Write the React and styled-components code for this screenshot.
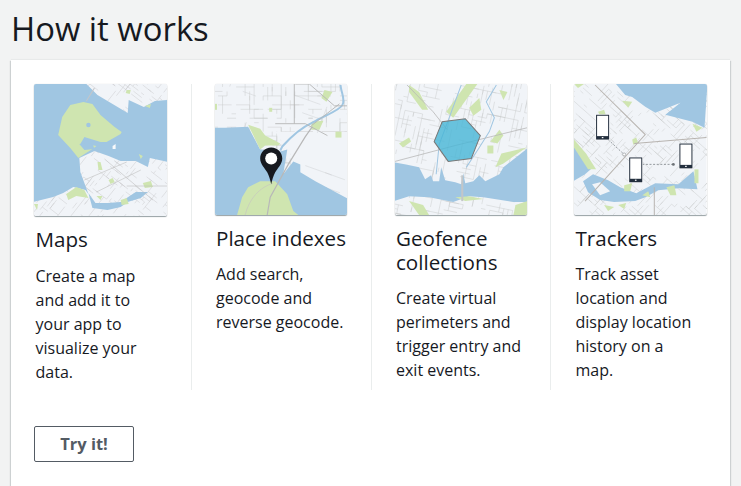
import React from "react";
import styled, { createGlobalStyle } from "styled-components";

const Global = createGlobalStyle`
  html, body { margin: 0; padding: 0; background: #f2f3f3; }
  body { font-family: "Open Sans", "Noto Sans", sans-serif; color: #16191f; }
`;
const Page = styled.div`
  width: 741px; height: 486px; overflow: hidden; box-sizing: border-box;
  padding: 0 11px; display: flex; flex-direction: column;
`;
const Heading = styled.h1`
  margin: 0; height: 60px; box-sizing: border-box; padding-top: 8px;
  font-size: 32.8px; line-height: 42px; font-weight: 400; color: #16191f;
`;
const Card = styled.section`
  flex: 1; width: 719px; background: #fff; padding-top: 24px; box-sizing: border-box;
  box-shadow: 0 -1px 1px 0 rgba(0,28,36,.04), 1px 1px 1px 0 rgba(0,28,36,.15), -1px 1px 1px 0 rgba(0,28,36,.15);
`;
const Columns = styled.div`
  display: grid; grid-template-columns: 180.5px 180px 179.5px 179px;
`;
const Column = styled.article`
  box-sizing: border-box; height: 306px; padding: 0 23px;
  border-right: ${p => (p.$last ? "none" : "1px solid #eaeded")};
`;
const Art = styled.div`
  width: ${p => (p.$tall ? 133 : 132.5)}px; height: ${p => (p.$tall ? 132 : 131)}px; margin-bottom: 11px;
  border-radius: 2px; overflow: hidden;
  box-shadow: 0 1px 1px 0 rgba(0,28,36,.4), 0 0 1px 0 rgba(0,28,36,.2);
  svg { display: block; width: 100%; height: 100%; filter: blur(0.4px); }
`;
const Title = styled.h2`
  margin: 0 0 ${p => (p.$tall ? 13 : 12)}px 1.5px; font-size: 20.6px; line-height: 24px; font-weight: 400; color: #16191f;
`;
const Body = styled.p`
  margin: 0 0 0 1.5px; font-size: 16px; line-height: 24px; color: #16191f;
`;
const Button = styled.button`
  display: block; margin: 36px 0 0 23px; width: 100px; height: 36px; box-sizing: border-box;
  background: #fff; border: 1px solid #545b64; border-radius: 2px;
  color: #545b64; font: 700 16.5px/22px "Open Sans", "Noto Sans", sans-serif; padding: 0;
`;

const LAND = "#f1f4f8", WATER = "#a0c6e2", GREEN = "#cfe5b0";

/* seeded street texture: short grid-aligned segments, drawn under the water */
function streets(seed, angle, step, count) {
  let s = seed;
  const r = () => ((s = (s * 16807) % 2147483647) / 2147483647);
  const a = (angle * Math.PI) / 180;
  const cos = Math.cos(a), sin = Math.sin(a);
  let d = "";
  for (let i = 0; i < count; i++) {
    const u = Math.round((r() * 220 - 110) / step) * step;
    const v = Math.round((r() * 220 - 110) / step) * step;
    const len = step * (1 + Math.floor(r() * 4));
    const h = r() > 0.5;
    const x1 = 66 + u * cos - v * sin, y1 = 66 + u * sin + v * cos;
    const du = h ? len : 0, dv = h ? 0 : len;
    const x2 = x1 + du * cos - dv * sin, y2 = y1 + du * sin + dv * cos;
    d += `M${x1.toFixed(1)} ${y1.toFixed(1)}L${x2.toFixed(1)} ${y2.toFixed(1)}`;
  }
  return d;
}
function Base({ seed, angle = 0, step = 4, count = 420, children }) {
  return (
    <svg viewBox="0 0 132 132" preserveAspectRatio="none" aria-hidden="true">
      <rect width="132" height="132" fill={LAND} />
      <path d={streets(seed, angle, step, count)} fill="none" stroke="#c6c8c9" strokeWidth=".45" />
      {children}
    </svg>
  );
}
const Poly = ({ f, p }) => <polygon fill={f} points={p} />;
const Road = ({ d, w = 0.8, c = "#b5b5b5", dash }) => (
  <path d={d} fill="none" stroke={c} strokeWidth={w} strokeDasharray={dash} />
);
const Specks = ({ items }) => items.map((p, i) => <Poly key={i} f={GREEN} p={p} />);

function MapsArt() {
  return (
    <Base seed={11} angle={38} step={3.5} count={760}>
      <path fillRule="evenodd" fill={WATER} d="M0 0H132V132H0Z
        M51 -1 L63 11 L78 20 L93 29 L94 16 L109 23 L120 17 L133 16 L133 -1Z
        M45 74 L60 67 L74 72 L86 77 L101 77 L113 83 L115 74 L133 78 L133 133 L-1 133 L-1 118 L19 113 L29 109 L39 103 L51 106 L54 110 L46 88Z" />
      <Poly f={GREEN} p="49,18 36,21 28,33 24,51 36,64 44,74 58,65 62,62 52,60 46,60 50,53 66,58 72,58 86,50 87,48 80,43 66,31 58,20" />
      <Poly f={WATER} p="45,60 58,59 60,65 50,66" />
      <circle cx="54" cy="41" r="2.2" fill={WATER} />
      <Poly f="#f7f9fb" p="78,62 81,60 81,65 78,65" />
      <Poly f={WATER} p="54,109 61,119 73,119 86,118 101,108 113,108 106,114 93,118 86,123 73,126 58,124" />
      <Poly f={GREEN} p="32,110 42,103 50,106 54,114 42,112 34,116" />
      <Specks items={["63,78 66,78 68,86 64,86", "108,99 116,97 118,103 110,104", "86,116 92,114 94,120 87,121", "74,96 78,94 80,98 76,100", "92,6 96,6 95,10 91,9", "110,22 116,20 115,24", "0,120 4,120 3,126", "104,70 108,72 106,75", "62,112 68,112 66,116"]} />
      <Road d="M52 17 L60 4" w="1" c="#c4c6c8" />
      <Road d="M70 75 L118 116M50 96 L92 78M62 108 L106 86M92 102 L133 102" w=".6" c="#c0c0c0" />
    </Base>
  );
}
function PlaceArt() {
  return (
    <Base seed={23} angle={0} step={4.5} count={760}>
      <Poly f={LAND} p="60,48 132,48 132,116 85,90 75,70" />
      <path d={streets(41, 20, 7, 80)} fill="none" stroke="#ccced0" strokeWidth=".45" clipPath="inset(50px 0 60px 60px)" />
      <Poly f={WATER} p="-1,44 10,44 33,43 45,66 65,68 72,66 68,91 78,78 85,81 85,89 100,98 133,116 133,133 -1,133" />
      <Poly f={GREEN} p="33,41 45,45 50,52 65,60 63,62 50,62 45,66" />
      <Poly f={GREEN} p="22,132 27,114 33,104 45,98 60,98 72,111 78,128 83,132" />
      <Specks items={["109,6 117,8 111,18 106,14", "96,38 108,37 104,46 96,46", "120,48 126,48 126,54 120,54", "54,24 57,24 57,28 54,28", "0,20 2,20 2,26 0,26"]} />
      <Road d="M125 1 C126 10 130 16 127 21 C124 27 108 32 97 39 C86 44 76 53 67 63 L65 67" w="2" c={WATER} />
      <Road d="M52 132 L55 114 L73 81 L90 53 L97 43" w="1.2" c="#b8b8b8" />
      <Road d="M79 0 V40 M80 0 H94 L119 22 H132 M60 40 H90 L112 52 M96 42 L124 20" w=".9" c="#b5b5b5" />
      <Road d="M30 132 C34 116 44 104 58 100" w=".7" c="#c7c7c0" />
      <path d="M56 64 C49.5 64 45 69.2 45 75 C45 81 50 85 52 89 C53.8 92.6 55.2 97 56 101 C56.8 97 58.2 92.6 60 89 C62 85 67 81 67 75 C67 69.2 62.5 64 56 64 Z" fill="#16191f" />
      <circle cx="56" cy="75" r="6" fill="#fff" />
    </Base>
  );
}
function GeoArt() {
  return (
    <Base seed={37} angle={12} step={4.5} count={700}>
      <Poly f={WATER} p="-1,79 11,81 24,84 30,96 36,92 38,98 44,98 46,84 50,97 60,99 66,101 68,90 70,100 78,98 84,92 90,98 104,91 108,84 133,64 133,119 118,119 88,114 74,113 58,119 34,114 14,113 -1,118" />
      <Poly f={GREEN} p="51,28 71,0 82,0 58,34" />
      <Poly f={GREEN} p="100,84 106,70 131,64 108,80" />
      <Poly f={GREEN} p="14,1 24,8 33,26 27,26 14,8" />
      <Specks items={["95,58 104,46 108,52 102,60", "4,60 14,54 16,58 8,64", "92,62 98,62 98,70 92,70", "118,132 120,122 132,118 132,132", "60,114 74,113 88,116 70,118", "14,118 28,122 34,132 24,132", "74,24 84,14 86,26 78,32", "104,6 112,8 108,16"]} />
      <Road d="M66 1 L54 34 L44 61 L41 91" w="1" c={WATER} />
      <Road d="M101 1 L91 18 L99 34 L94 48 L84 64 L71 84" w="1" c={WATER} />
      <Road d="M67 92 V118" w="2" c="#c3c6c8" />
      <Road d="M12 1 L38 28 L52 46 M0 78 L30 70 L60 62 L132 44" w=".8" c="#b8b8b8" />
      <polygon points="39,58 47,38 70,35 85,52 76,75 53,78" fill="#46b5d6" fillOpacity=".8" stroke="#777" strokeWidth="1" />
    </Base>
  );
}
function Phone({ x, y }) {
  return (
    <g>
      <rect x={x - 0.6} y={y - 0.6} width="14.2" height="26.2" fill="#fff" opacity=".9" />
      <rect x={x} y={y} width="13" height="25" fill="#232f3e" />
      <rect x={x + 1} y={y + 1} width="11" height="20.5" fill="#fff" />
      <rect x={x + 5.7} y={y + 22.4} width="1.6" height="1.2" fill="#fff" />
    </g>
  );
}
function TrackersArt() {
  return (
    <Base seed={53} angle={42} step={4} count={820}>
      <Poly f={WATER} p="41,-1 51,11 58,13 71,23 81,29 106,19 91,31 118,38 130,44 133,-1" />
      <Poly f={WATER} p="9,98 19,91 34,97 46,104 62,110 81,100 104,101 119,88 123,106 104,105 84,107 71,114 61,118 40,119 26,117 14,109" />
      <Poly f={WATER} p="-1,61 11,71 19,84 11,91 -1,98" />
      <Poly f={LAND} p="18,101 26,99 36,108 26,112" />
      <Poly f={GREEN} p="0,56 12,70 22,86 14,86 0,64" />
      <Specks items={["0,0 10,0 4,4", "48,17 58,18 54,24", "24,28 30,26 32,32 26,32", "58,56 62,54 64,60 59,61", "50,102 58,100 56,108 50,108", "92,104 100,102 102,112 96,112", "118,40 128,44 122,48", "120,86 124,86 124,100 120,100", "30,122 40,124 34,128", "68,112 74,108 76,114", "44,122 52,120 50,126"]} />
      <Road d="M21 1 L71 51 L11 118 M60 60 L132 54 M80 104 V132" w="1" c="#b8b4b0" />
      <Road d="M34 56 L50 71 M68 81 L99 81" w=".9" c="#8a8f94" dash="2 1.6" />
      <circle cx="50" cy="71" r="1.5" fill="#fff" stroke="#8a8f94" strokeWidth=".6" />
      <circle cx="99" cy="81" r="1.4" fill="#6d7277" />
      <Phone x={22} y={31} />
      <Phone x={55} y={74} />
      <Phone x={105} y={60} />
    </Base>
  );
}

const items = [
  { title: "Maps", body: ["Create a map", "and add it to", "your app to", "visualize your", "data."], A: MapsArt, tall: true },
  { title: "Place indexes", body: ["Add search,", "geocode and", "reverse geocode."], A: PlaceArt },
  { title: ["Geofence", "collections"], body: ["Create virtual", "perimeters and", "trigger entry and", "exit events."], A: GeoArt },
  { title: "Trackers", body: ["Track asset", "location and", "display location", "history on a", "map."], A: TrackersArt },
];
const lines = v => (Array.isArray(v) ? v : [v]).map((l, i) => <React.Fragment key={i}>{i > 0 && <br />}{l}</React.Fragment>);

export default function App() {
  return (
    <Page>
      <Global />
      <Heading>How it works</Heading>
      <Card>
        <Columns>
          {items.map(({ title, body, A, tall }, i) => (
            <Column key={i} $last={i === 3}>
              <Art $tall={tall}><A /></Art>
              <Title $tall={tall}>{lines(title)}</Title>
              <Body>{lines(body)}</Body>
            </Column>
          ))}
        </Columns>
        <Button>Try it!</Button>
      </Card>
    </Page>
  );
}
